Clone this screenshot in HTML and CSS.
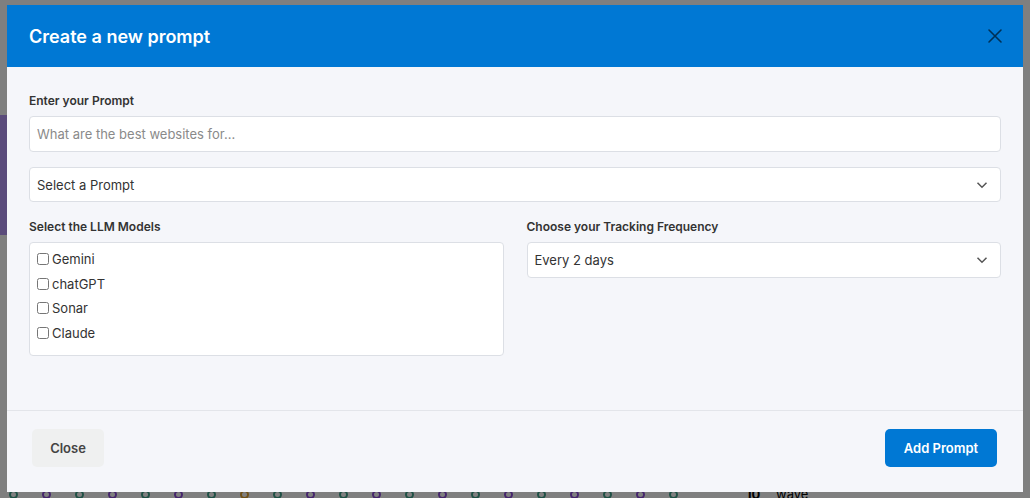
FILE: index.html
```html
<!DOCTYPE html>
<html lang="en">
<head>
    <meta charset="UTF-8">
    <meta name="viewport" content="width=device-width, initial-scale=1.0">
    <title>Prompts</title>
    <link rel="stylesheet" href="styles.css">
</head>
<body>
    <!-- page behind the modal -->
    <div class="page">
        <div class="top">
            <div class="sidebar">
                <div class="nav-active"></div>
            </div>
        </div>
        <div class="chart-row">
            <span class="dot"></span><span class="dot purple"></span><span class="dot"></span><span class="dot purple"></span><span class="dot"></span><span class="dot purple"></span><span class="dot"></span><span class="dot orange"></span><span class="dot"></span><span class="dot purple"></span><span class="dot"></span><span class="dot purple"></span><span class="dot"></span><span class="dot purple"></span><span class="dot"></span><span class="dot purple"></span><span class="dot"></span><span class="dot purple"></span><span class="dot"></span><span class="dot purple"></span><span class="dot"></span>
            <span class="legend"><b>10</b> wave</span>
        </div>
    </div>

    <div class="overlay">
        <div class="modal">
            <div class="modal-header">
                <h2>Create a new prompt</h2>
                <button class="close-x" aria-label="Close">
                    <svg width="16" height="16" viewBox="0 0 16 16"><path d="M2 2L14 14M14 2L2 14" stroke="currentColor" stroke-width="1.6" stroke-linecap="round"/></svg>
                </button>
            </div>

            <div class="modal-body">
                <label class="field-label">Enter your Prompt</label>
                <input type="text" class="field" placeholder="What are the best websites for...">

                <div class="field select">
                    <span>Select a Prompt</span>
                    <svg class="chevron" width="12" height="8" viewBox="0 0 12 8"><path d="M1.5 1.8L6 6.2L10.5 1.8" fill="none" stroke="currentColor" stroke-width="1.5"/></svg>
                </div>

                <div class="columns">
                    <div class="col">
                        <label class="field-label">Select the LLM Models</label>
                        <div class="models">
                            <label class="check"><input type="checkbox"> Gemini</label>
                            <label class="check"><input type="checkbox"> chatGPT</label>
                            <label class="check"><input type="checkbox"> Sonar</label>
                            <label class="check"><input type="checkbox"> Claude</label>
                        </div>
                    </div>
                    <div class="col">
                        <label class="field-label">Choose your Tracking Frequency</label>
                        <div class="field select freq">
                            <span>Every 2 days</span>
                            <svg class="chevron" width="12" height="8" viewBox="0 0 12 8"><path d="M1.5 1.8L6 6.2L10.5 1.8" fill="none" stroke="currentColor" stroke-width="1.5"/></svg>
                        </div>
                    </div>
                </div>
            </div>

            <div class="modal-footer">
                <button class="btn btn-light">Close</button>
                <button class="btn btn-primary">Add Prompt</button>
            </div>
        </div>
    </div>
</body>
</html>
```

FILE: styles.css
```css
* {
    box-sizing: border-box;
}
body {
    margin: 0;
    font-family: Inter, "Noto Sans", Arial, sans-serif;
    color: #333;
    background: #ffffff;
    overflow: hidden;
}
.page {
    display: flex;
    flex-direction: column;
    height: 498px;
}
.top {
    flex: 1;
}
.sidebar {
    width: 220px;
    padding-top: 115px;
}
.nav-active {
    height: 120px;
    background: #b596f6;
}
.chart-row {
    display: flex;
    align-items: center;
    height: 14px;
    padding-left: 9px;
    margin-bottom: -3px;
}
.dot {
    width: 9px;
    height: 9px;
    border-radius: 50%;
    border: 2px solid #3fa08a;
    margin-right: 24px;
    background: #fff;
}
.dot.purple {
    border-color: #8a4ad8;
}
.dot.orange {
    border-color: #e0a030;
}
.legend {
    margin-left: 44px;
    font-size: 13px;
    line-height: 14px;
    color: #000;
}
.legend b {
    margin-right: 12px;
}

/* modal */
.overlay {
    position: fixed;
    inset: 0;
    background: rgba(0, 0, 0, 0.5);
    padding: 5px 7px;
}
.modal {
    width: 1016px;
    height: 487px;
    background: #f5f6fa;
    display: flex;
    flex-direction: column;
}
.modal-header {
    height: 62px;
    background: #0078d4;
    display: flex;
    align-items: center;
    justify-content: space-between;
    padding: 0 20px 0 22px;
}
.modal-header h2 {
    margin: 0;
    font-size: 18px;
    font-weight: 600;
    color: #fff;
}
.close-x {
    border: none;
    background: none;
    padding: 0;
    color: rgba(0, 0, 0, 0.6);
    display: flex;
    cursor: pointer;
}
.modal-body {
    flex: 1;
    padding: 26px 22px 0;
}
.field-label {
    display: block;
    font-size: 12px;
    font-weight: 600;
    color: #333;
    line-height: 16px;
    margin-bottom: 7px;
}
.field {
    display: flex;
    align-items: center;
    width: 100%;
    height: 36px;
    padding: 0 7px;
    border: 1px solid #dcdfe5;
    border-radius: 4px;
    background: #fff;
    font-family: inherit;
    font-size: 13px;
    color: #333;
}
input.field::placeholder {
    color: #8a8a8a;
}
input.field:focus {
    outline: none;
    border-color: #0078d4;
}
.select {
    justify-content: space-between;
    margin-top: 15px;
    height: 35px;
    padding-right: 12px;
}
.chevron {
    color: #555;
}
.columns {
    display: grid;
    grid-template-columns: 1fr 1fr;
    gap: 23px;
    margin-top: 17px;
}
.freq {
    margin-top: 0;
    height: 36px;
}
.models {
    height: 114px;
    border: 1px solid #dcdfe5;
    border-radius: 4px;
    background: #fff;
    padding: 4px 7px;
}
.check {
    display: flex;
    align-items: center;
    height: 24.5px;
    font-size: 13px;
    color: #333;
}
.check input {
    width: 12px;
    height: 12px;
    margin: 0 3px 0 0;
}
.modal-footer {
    height: 82px;
    border-top: 1px solid #e3e5ea;
    display: flex;
    align-items: center;
    justify-content: space-between;
    padding: 0 26px 8px 25px;
}
.btn {
    height: 38px;
    border: none;
    border-radius: 5px;
    font-family: inherit;
    font-size: 13px;
    font-weight: 600;
    cursor: pointer;
    padding: 0 18px;
}
.btn-light {
    width: 72px;
    background: #eff0f0;
    color: #444;
}
.btn-primary {
    width: 112px;
    background: #0078d4;
    color: #fff;
}
.btn-primary:hover {
    background: #006cbe;
}
```
